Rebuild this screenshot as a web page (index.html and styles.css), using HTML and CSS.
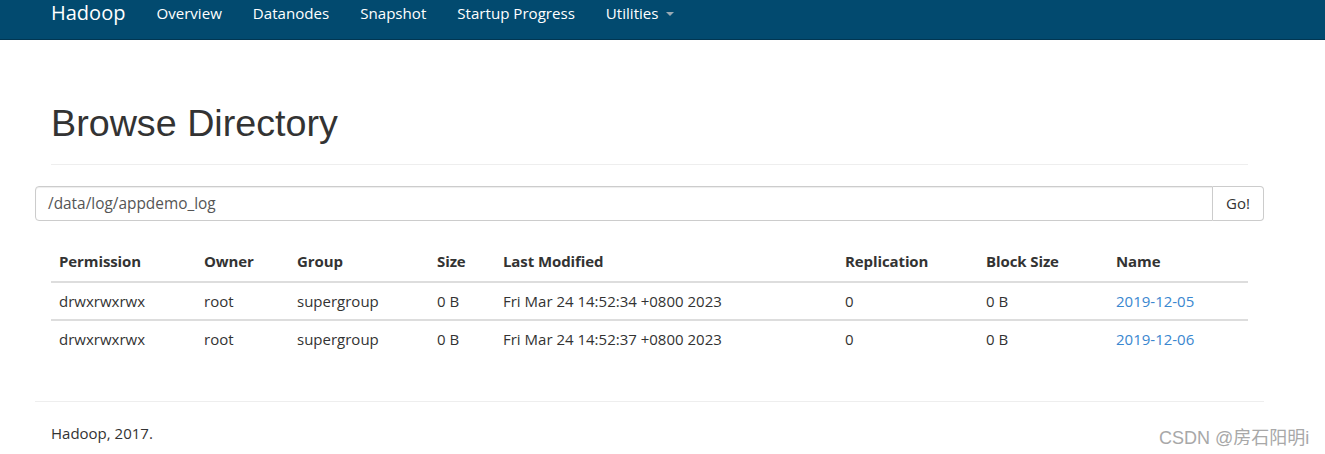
FILE: index.html
```html
<!DOCTYPE html>
<html>
<head>
<meta charset="utf-8">
<link rel="stylesheet" href="styles.css">
</head>
<body>
<nav class="navbar">
  <div class="nav-inner">
    <span class="brand">Hadoop</span>
    <span class="nav-item">Overview</span>
    <span class="nav-item">Datanodes</span>
    <span class="nav-item">Snapshot</span>
    <span class="nav-item">Startup Progress</span>
    <span class="nav-item">Utilities <span class="caret"></span></span>
  </div>
</nav>
<div class="page">
  <div class="header">
    <h1>Browse Directory</h1>
  </div>
  <div class="input-group">
    <div class="path-input">/data/log/appdemo_log</div>
    <div class="go-btn">Go!</div>
  </div>
  <table class="listing">
    <colgroup>
      <col style="width:145px"><col style="width:93px"><col style="width:140px"><col style="width:66px"><col style="width:342px"><col style="width:141px"><col style="width:130px"><col>
    </colgroup>
    <thead>
      <tr><th>Permission</th><th>Owner</th><th>Group</th><th>Size</th><th>Last Modified</th><th>Replication</th><th>Block Size</th><th>Name</th></tr>
    </thead>
    <tbody>
      <tr><td>drwxrwxrwx</td><td>root</td><td>supergroup</td><td>0 B</td><td>Fri Mar 24 14:52:34 +0800 2023</td><td>0</td><td>0 B</td><td><a class="link">2019-12-05</a></td></tr>
      <tr><td>drwxrwxrwx</td><td>root</td><td>supergroup</td><td>0 B</td><td>Fri Mar 24 14:52:37 +0800 2023</td><td>0</td><td>0 B</td><td><a class="link">2019-12-06</a></td></tr>
    </tbody>
  </table>
  <div class="footer">
    <p>Hadoop, 2017.</p>
  </div>
</div>
<div class="watermark">CSDN @房石阳明i</div>
</body>
</html>
```
FILE: styles.css
```css
html, body {
  margin: 0;
  padding: 0;
  background: #fff;
}
body {
  font-family: "Open Sans", "Noto Sans", sans-serif;
  font-size: 14px;
  color: #333;
  position: relative;
  height: 454px;
  overflow: hidden;
}
.navbar {
  background: #024a6f;
  height: 39px;
  border-bottom: 1px solid #013652;
}
.nav-inner {
  display: flex;
  align-items: center;
  height: 25px;
  padding-left: 51px;
}
.brand {
  color: #fff;
  font-size: 20px;
  font-weight: 500;
  margin-right: 31px;
}
.nav-item {
  color: #fff;
  font-size: 15.1px;
  margin-right: 31px;
}
.caret {
  display: inline-block;
  width: 0;
  height: 0;
  margin-left: 4px;
  vertical-align: middle;
  border-top: 4px solid #9aa9b3;
  border-left: 4px solid transparent;
  border-right: 4px solid transparent;
}
.page {
  padding: 0 61px 0 35px;
}
.header {
  margin: 0 16px;
  padding-top: 62px;
  padding-bottom: 19px;
  border-bottom: 1px solid #eee;
}
h1 {
  margin: 0;
  font-family: "Liberation Sans", Arial, sans-serif;
  font-weight: 400;
  font-size: 37.7px;
  line-height: 43px;
  color: #333;
}
.input-group {
  display: flex;
  margin-top: 21px;
  height: 35px;
}
.path-input {
  flex: 1;
  border: 1px solid #ccc;
  border-radius: 4px 0 0 4px;
  padding: 0 12px;
  line-height: 33px;
  font-size: 15.4px;
  color: #555;
  box-shadow: inset 0 1px 1px rgba(0,0,0,.075);
}
.go-btn {
  border: 1px solid #ccc;
  border-left: none;
  border-radius: 0 4px 4px 0;
  width: 50px;
  text-align: center;
  line-height: 33px;
  font-size: 15px;
  color: #333;
}
.listing {
  margin: 23px 16px 0 16px;
  width: calc(100% - 32px);
  border-collapse: collapse;
  table-layout: fixed;
  font-size: 15px;
}
.listing th {
  text-align: left;
  font-weight: 700;
  padding: 7px 8px 10px;
  line-height: 20px;
  border-bottom: 2px solid #ddd;
  letter-spacing: -0.1px;
}
.listing td {
  padding: 8px;
  line-height: 20px;
  border-top: 1px solid #ddd;
}
.listing tbody tr:first-child td {
  border-top: none;
}
.listing tbody tr:nth-child(2) td {
  border-top: 2px solid #ddd;
}
.link {
  color: #3a87cf;
}
.footer {
  margin-top: 44px;
  border-top: 1px solid #eee;
}
.footer p {
  margin: 21px 16px 0;
  font-size: 15px;
  line-height: 20px;
}
.watermark {
  position: absolute;
  left: 1159px;
  top: 423px;
  font-family: "Liberation Sans", "Noto Sans CJK SC", sans-serif;
  font-size: 18px;
  color: #a8a8a8;
}
```
